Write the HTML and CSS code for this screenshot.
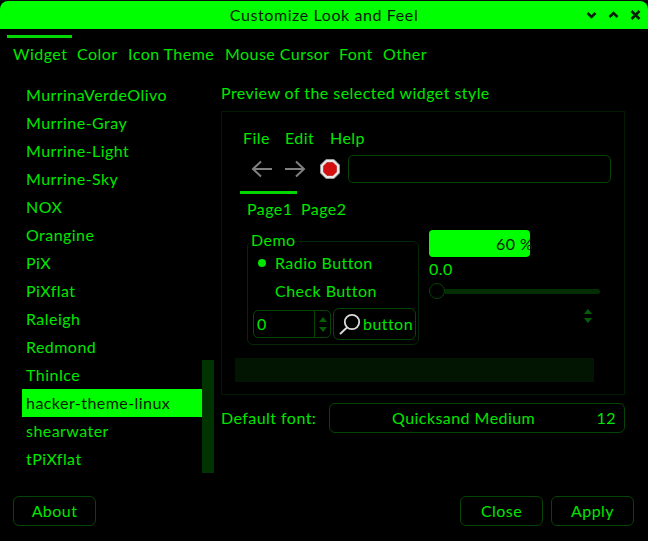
FILE: index.html
```html
<!DOCTYPE html>
<html lang="en">
<head>
<meta charset="utf-8">
<title>Customize Look and Feel</title>
<link rel="stylesheet" href="styles.css">
</head>
<body>
<div class="window">
  <div class="topline"></div>
  <header class="titlebar">
    <span class="title">Customize Look and Feel</span>
    <div class="wm">
      <svg width="10" height="8" viewBox="0 0 10 8"><path d="M1 2l4 4 4-4" class="wmi"/></svg>
      <svg width="10" height="8" viewBox="0 0 10 8"><path d="M1 6l4-4 4 4" class="wmi"/></svg>
      <svg width="10" height="10" viewBox="0 0 10 10"><path d="M1 1l8 8M9 1l-8 8" class="wmi"/></svg>
    </div>
  </header>
  <nav class="tabs">
    <span class="tab active">Widget</span>
    <span class="tab t2">Color</span>
    <span class="tab t3">Icon Theme</span>
    <span class="tab t4">Mouse Cursor</span>
    <span class="tab t5">Font</span>
    <span class="tab t6">Other</span>
  </nav>
  <main class="main">
    <div class="listwrap">
      <ul class="list">
        <li>MurrinaVerdeOlivo</li>
        <li>Murrine-Gray</li>
        <li>Murrine-Light</li>
        <li>Murrine-Sky</li>
        <li>NOX</li>
        <li>Orangine</li>
        <li>PiX</li>
        <li>PiXflat</li>
        <li>Raleigh</li>
        <li>Redmond</li>
        <li>ThinIce</li>
        <li class="sel">hacker-theme-linux</li>
        <li>shearwater</li>
        <li>tPiXflat</li>
      </ul>
      <div class="scrollbar"></div>
    </div>
    <section class="right">
      <div class="preview-label">Preview of the selected widget style</div>
      <div class="frame">
        <div class="menubar"><span class="m1">File</span><span class="m2">Edit</span><span>Help</span></div>
        <div class="toolbar">
          <svg class="arrow" width="22" height="18" viewBox="0 0 22 18"><path d="M21 9H2M10 1.500L2 9l8 7.500" class="arr"/></svg>
          <svg class="arrow fwd" width="22" height="18" viewBox="0 0 22 18"><path d="M1 9h19M12 1.500L20 9l-8 7.500" class="arr"/></svg>
          <svg class="stop" width="20" height="20" viewBox="0 0 20 20"><path d="M6 .5h8L19.500 6v8L14 19.500H6L.5 14V6z" class="stop-o"/><path d="M7 3.500h6L16.500 7v6L13 16.500H7L3.500 13V7z" class="stop-i"/></svg>
          <div class="entry"></div>
        </div>
        <div class="nbtabs"><span class="nbtab on">Page1</span><span class="nbtab">Page2</span></div>
        <div class="page">
          <fieldset class="demo">
            <span class="legend">Demo</span>
            <div class="row"><span class="dot"></span>Radio Button</div>
            <div class="row">Check Button</div>
            <div class="controls">
              <div class="spin"><span class="val">0</span><span class="steps"><i class="up"></i><i class="down"></i></span></div>
              <div class="btn-search">
                <svg width="24" height="24" viewBox="0 0 24 24"><circle cx="14" cy="10" r="7.200" class="lens"/><path d="M9 15.500L2 22" class="lens"/></svg>
                <span>button</span>
              </div>
            </div>
          </fieldset>
          <div class="side">
            <div class="progress">60 %</div>
            <div class="scale-val">0.0</div>
            <div class="slider"><span class="knob"></span><span class="trough"></span></div>
            <div class="steppers"><i class="up"></i><i class="down"></i></div>
          </div>
        </div>
        <div class="status"></div>
      </div>
      <div class="fontrow">
        <span class="fontlabel">Default font:</span>
        <div class="fontbtn"><span class="fname">Quicksand Medium</span><span class="fsize">12</span></div>
      </div>
    </section>
  </main>
  <footer class="footer">
    <button class="btn">About</button>
    <span class="grow"></span>
    <button class="btn">Close</button>
    <button class="btn">Apply</button>
  </footer>
</div>
</body>
</html>
```
FILE: styles.css
```css
* { box-sizing: border-box; }
html, body { margin: 0; padding: 0; background: #000; }
body { font-family: Lato, "Noto Sans", sans-serif; font-size: 16px; color: #00e600; line-height: 24px; letter-spacing: 0.45px; }
.window { width: 648px; height: 541px; display: flex; flex-direction: column; background: #000; overflow: hidden; }
.topline { height: 1px; background: #0a0f0a; flex: none; }
.titlebar { height: 28px; flex: none; background: #00ff00; border-radius: 8px 8px 0 0; display: flex; align-items: center; justify-content: center; position: relative; color: #0a1a0a; }
.title { letter-spacing: 0.6px; }
.wm { position: absolute; right: 7px; top: 9px; display: flex; gap: 11px; align-items: center; }
.wm svg { width: 11px; }
.wmi { fill: none; stroke: #062006; stroke-width: 2.600; }
.tabs { height: 52px; flex: none; padding: 13px 0 0 13px; display: flex; }
.tab { display: block; position: relative; flex: none; }
.active { width: 64px; }
.active::before { content: ""; position: absolute; left: -6px; top: -7px; width: 65px; height: 3px; background: #00d800; }
.t2 { width: 51px; }
.t3 { width: 97px; }
.t4 { width: 114px; }
.t5 { width: 44px; }
.main { flex: none; height: 392px; display: flex; padding-left: 22px; }
.listwrap { width: 192px; flex: none; display: flex; }
.list { list-style: none; margin: 0; padding: 0; width: 180px; flex: none; }
.list li { height: 28px; line-height: 28px; padding-left: 4px; }
.list .sel { background: #00ff00; color: #062006; }
.scrollbar { width: 12px; height: 113px; align-self: flex-end; background: #003300; }
.right { margin-left: 7px; width: 404px; flex: none; display: flex; flex-direction: column; }
.preview-label { height: 30px; }
.frame { height: 284px; border: 1px solid #021a02; flex: none; }
.menubar { margin: 14px 0 0 21px; height: 24px; display: flex; }
.m1 { width: 42px; }
.m2 { width: 45px; }
.toolbar { margin: 5px 0 0 29px; height: 28px; display: flex; align-items: center; }
.fwd { margin-left: 11px; }
.stop { margin-left: 14px; }
.arr { fill: none; stroke: #808080; stroke-width: 2; }
.stop-o { fill: #e8e8e8; stroke: #999; stroke-width: 1; }
.stop-i { fill: #d40f0f; stroke: #a00; stroke-width: .5; }
.entry { margin-left: 8px; width: 263px; height: 28px; border: 1px solid #064506; border-radius: 5px; }
.nbtabs { margin: 8px 0 0 18px; height: 30px; display: flex; }
.nbtab { display: block; padding: 6px 0 0 7px; width: 57px; position: relative; }
.nbtab.on { width: 54px; }
.nbtab.on::before { content: ""; position: absolute; left: 0; top: 0; width: 57px; height: 3px; background: #00d800; }
.page { height: 124px; display: flex; margin-left: 25px; }
.demo { position: relative; margin: 20px 0 0; padding: 7px 0 0 5px; width: 172px; height: 104px; border: 1px solid #032803; border-radius: 6px; min-width: 0; }
.legend { position: absolute; left: 1px; top: -14px; background: #000; padding: 0 2px; line-height: 24px; height: 24px; }
.row { height: 28px; line-height: 28px; padding-left: 22px; position: relative; }
.dot { position: absolute; left: 5px; top: 10px; width: 8px; height: 8px; border-radius: 50%; background: #00e600; }
.controls { display: flex; margin-top: 3px; align-items: flex-start; }
.spin { margin-top: 2px; width: 78px; height: 28px; border: 1px solid #064506; border-radius: 5px; display: flex; justify-content: space-between; }
.val { padding-left: 3px; line-height: 26px; }
.steps { width: 16px; border-left: 1px solid #064506; display: flex; flex-direction: column; align-items: center; justify-content: center; gap: 5px; }
.up { display: block; width: 0; height: 0; border: 4px solid transparent; border-top: 0; border-bottom: 5px solid #056005; }
.down { display: block; width: 0; height: 0; border: 4px solid transparent; border-bottom: 0; border-top: 5px solid #056005; }
.btn-search { margin-left: 2px; width: 83px; height: 32px; border: 1px solid #064506; border-radius: 6px; display: flex; align-items: center; padding-left: 4px; gap: 1px; line-height: 30px; }
.lens { fill: none; stroke: #dcdcdc; stroke-width: 1.800; }
.side { margin: 9px 0 0 10px; width: 171px; flex: none; }
.progress { width: 101px; height: 27px; background: #00ff00; border-radius: 4px; color: #062006; line-height: 27px; padding-left: 67px; white-space: nowrap; }
.scale-val { height: 24px; line-height: 24px; }
.slider { margin-top: 2px; height: 16px; display: flex; align-items: center; position: relative; }
.knob { width: 16px; height: 16px; border: 1px solid #064506; border-radius: 50%; background: #000; flex: none; position: relative; }
.trough { flex: 1; height: 5px; background: #032e03; border-radius: 0 3px 3px 0; }
.steppers { margin: 10px 0 0 155px; width: 9px; display: flex; flex-direction: column; gap: 4px; }
.status { margin: 13px 0 0 13px; width: 359px; height: 24px; background: #021402; }
.fontrow { margin-top: 8px; height: 30px; display: flex; align-items: center; }
.fontlabel { width: 108px; flex: none; }
.fontbtn { width: 296px; height: 30px; border: 1px solid #064506; border-radius: 6px; display: flex; align-items: center; padding: 0 8px 0 62px; }
.fname { flex: 1; }
.footer { flex: none; margin-top: 23px; padding: 0 14px 0 13px; display: flex; gap: 8px; height: 30px; }
.grow { flex: 1; }
.btn { width: 83px; height: 30px; background: #000; border: 1px solid #064506; border-radius: 6px; color: #00e600; font: inherit; letter-spacing: inherit; padding: 0; }
```
